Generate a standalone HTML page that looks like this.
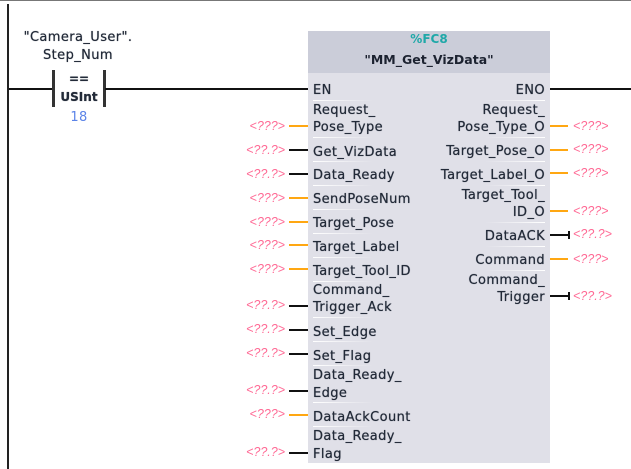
<!DOCTYPE html>
<html><head><meta charset="utf-8"><style>
html,body{margin:0;padding:0;background:#fff}
#p{position:relative;width:631px;height:469px;overflow:hidden;background:#fff;font-family:"DejaVu Sans",sans-serif;font-size:13px;color:#222a38}
#p div{position:absolute}
.l,.r,.c{height:16px;line-height:16px;white-space:nowrap;letter-spacing:.4px;text-shadow:0 0 .6px #222a38;filter:blur(.35px)}
.l,.r{margin-top:2px}
.l{left:313px}
.r{right:86px;text-align:right}
.c{text-align:center}
.wk{height:2px;background:#111}
.wo{height:2px;background:#ffa712}
.pl{color:#ff6a95;font-size:12.5px;height:14px;line-height:14px;font-family:"Liberation Sans",sans-serif;font-style:italic;white-space:nowrap;filter:blur(.3px)}
.pa{right:346px;text-align:right}
.pb{left:573px}
.s{height:1px;left:313px;width:60px;background:linear-gradient(90deg,#fff,#e0e0e8)}
.sr{height:1px;left:485px;width:60px;background:linear-gradient(90deg,#e0e0e8,#fff)}
.tv{width:2px;height:8px;background:#111;left:568px}
</style></head><body><div id="p">
<div style="left:0;top:0;width:631px;height:1px;background:#777"></div>
<div style="left:7px;top:4px;width:2px;height:465px;background:#222"></div>
<div style="left:9px;top:88px;width:43px;height:2px;background:#111"></div>
<div style="left:52px;top:70px;width:3px;height:37px;background:#333"></div>
<div style="left:103px;top:70px;width:3px;height:37px;background:#333"></div>
<div style="left:105px;top:88px;width:203px;height:2px;background:#111"></div>
<div style="left:550px;top:88px;width:81px;height:2px;background:#111"></div>
<div class="c" style="left:18px;width:120px;top:30px">"Camera_User".</div>
<div class="c" style="left:18px;width:120px;top:48px">Step_Num</div>
<div class="c" style="left:55px;width:48px;top:71px;font-weight:bold;font-size:12px;letter-spacing:0">==</div>
<div class="c" style="left:55px;width:48px;top:89px;font-weight:bold;font-size:12px;letter-spacing:0">USInt</div>
<div class="c" style="left:55px;width:48px;top:110px;color:#5c84e8;text-shadow:none">18</div>

<div style="left:308px;top:31px;width:242px;height:432px;background:#e0e0e8"></div>
<div style="left:308px;top:31px;width:242px;height:42px;background:#cbcdd9"></div>
<div class="c" style="left:308px;width:242px;top:31px;color:#1fa8a8;font-weight:bold;font-size:12px;letter-spacing:0;text-shadow:none">%FC8</div>
<div class="c" style="left:308px;width:242px;top:52px;font-weight:bold;color:#1c2230;font-size:12.5px;letter-spacing:0;text-shadow:none">"MM_Get_VizData"</div>

<div class="l" style="top:81px">EN</div>
<div class="l" style="top:101px">Request_</div>
<div class="l" style="top:118px">Pose_Type</div>
<div class="l" style="top:143px">Get_VizData</div>
<div class="l" style="top:166px">Data_Ready</div>
<div class="l" style="top:190px">SendPoseNum</div>
<div class="l" style="top:214px">Target_Pose</div>
<div class="l" style="top:238px">Target_Label</div>
<div class="l" style="top:262px">Target_Tool_ID</div>
<div class="l" style="top:281px">Command_</div>
<div class="l" style="top:298px">Trigger_Ack</div>
<div class="l" style="top:323px">Set_Edge</div>
<div class="l" style="top:347px">Set_Flag</div>
<div class="l" style="top:366px">Data_Ready_</div>
<div class="l" style="top:384px">Edge</div>
<div class="l" style="top:408px">DataAckCount</div>
<div class="l" style="top:427px">Data_Ready_</div>
<div class="l" style="top:445px">Flag</div>

<div class="r" style="top:81px">ENO</div>
<div class="r" style="top:101px">Request_</div>
<div class="r" style="top:118px">Pose_Type_O</div>
<div class="r" style="top:142px">Target_Pose_O</div>
<div class="r" style="top:166px">Target_Label_O</div>
<div class="r" style="top:186px">Target_Tool_</div>
<div class="r" style="top:203px">ID_O</div>
<div class="r" style="top:227px">DataACK</div>
<div class="r" style="top:251px">Command</div>
<div class="r" style="top:271px">Command_</div>
<div class="r" style="top:288px">Trigger</div>

<div class="s" style="top:100px"></div><div class="s" style="top:137px"></div><div class="s" style="top:161px"></div><div class="s" style="top:185px"></div><div class="s" style="top:209px"></div><div class="s" style="top:233px"></div><div class="s" style="top:257px"></div><div class="s" style="top:281px"></div><div class="s" style="top:317px"></div><div class="s" style="top:341px"></div><div class="s" style="top:365px"></div><div class="s" style="top:402px"></div><div class="s" style="top:426px"></div>
<div class="sr" style="top:100px"></div><div class="sr" style="top:137px"></div><div class="sr" style="top:161px"></div><div class="sr" style="top:185px"></div><div class="sr" style="top:222px"></div><div class="sr" style="top:246px"></div><div class="sr" style="top:270px"></div>

<div class="wo" style="left:289px;width:19px;top:125px"></div><div class="pl pa" style="top:119px">&lt;???&gt;</div>
<div class="wk" style="left:289px;width:19px;top:149px"></div><div class="pl pa" style="top:143px">&lt;??.?&gt;</div>
<div class="wk" style="left:289px;width:19px;top:173px"></div><div class="pl pa" style="top:167px">&lt;??.?&gt;</div>
<div class="wo" style="left:289px;width:19px;top:197px"></div><div class="pl pa" style="top:191px">&lt;???&gt;</div>
<div class="wo" style="left:289px;width:19px;top:221px"></div><div class="pl pa" style="top:215px">&lt;???&gt;</div>
<div class="wo" style="left:289px;width:19px;top:244px"></div><div class="pl pa" style="top:238px">&lt;???&gt;</div>
<div class="wo" style="left:289px;width:19px;top:268px"></div><div class="pl pa" style="top:262px">&lt;???&gt;</div>
<div class="wk" style="left:289px;width:19px;top:305px"></div><div class="pl pa" style="top:298px">&lt;??.?&gt;</div>
<div class="wk" style="left:289px;width:19px;top:329px"></div><div class="pl pa" style="top:322px">&lt;??.?&gt;</div>
<div class="wk" style="left:289px;width:19px;top:353px"></div><div class="pl pa" style="top:346px">&lt;??.?&gt;</div>
<div class="wk" style="left:289px;width:19px;top:390px"></div><div class="pl pa" style="top:383px">&lt;??.?&gt;</div>
<div class="wo" style="left:289px;width:19px;top:414px"></div><div class="pl pa" style="top:407px">&lt;???&gt;</div>
<div class="wk" style="left:289px;width:19px;top:452px"></div><div class="pl pa" style="top:445px">&lt;??.?&gt;</div>

<div class="wo" style="left:550px;width:18px;top:125px"></div><div class="pl pb" style="top:119px">&lt;???&gt;</div>
<div class="wo" style="left:550px;width:18px;top:149px"></div><div class="pl pb" style="top:142px">&lt;???&gt;</div>
<div class="wo" style="left:550px;width:18px;top:172px"></div><div class="pl pb" style="top:166px">&lt;???&gt;</div>
<div class="wo" style="left:550px;width:18px;top:210px"></div><div class="pl pb" style="top:204px">&lt;???&gt;</div>
<div class="wk" style="left:550px;width:19px;top:234px"></div><div class="tv" style="top:231px"></div><div class="pl pb" style="top:227px">&lt;??.?&gt;</div>
<div class="wo" style="left:550px;width:18px;top:258px"></div><div class="pl pb" style="top:252px">&lt;???&gt;</div>
<div class="wk" style="left:550px;width:19px;top:295px"></div><div class="tv" style="top:292px"></div><div class="pl pb" style="top:289px">&lt;??.?&gt;</div>
</div></body></html>
